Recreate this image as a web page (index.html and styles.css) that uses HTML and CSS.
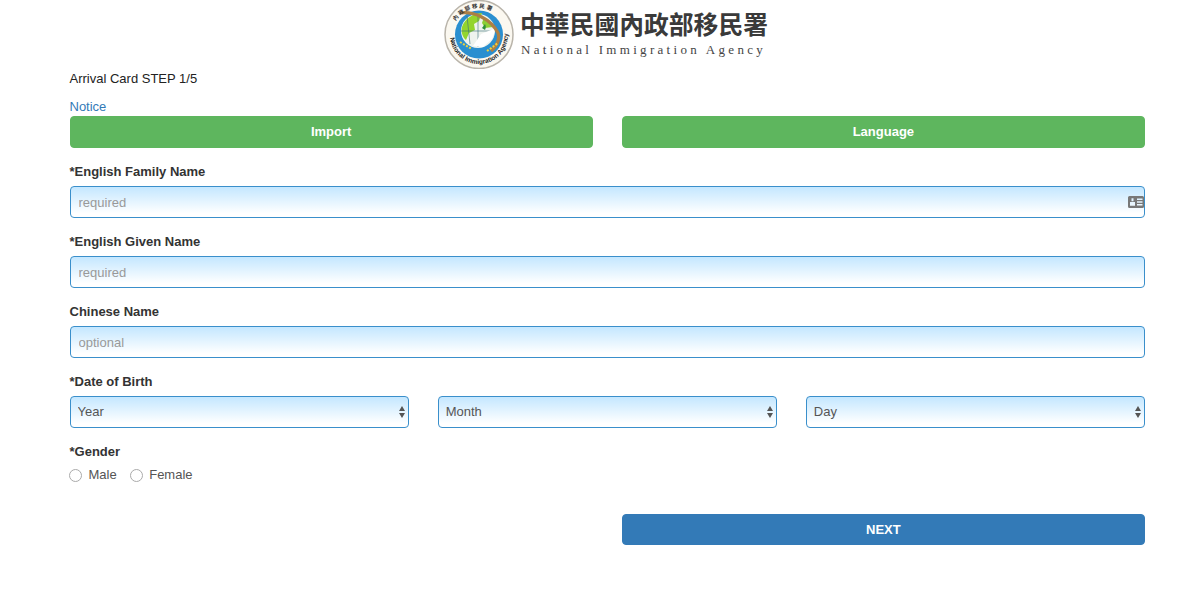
FILE: index.html
```html
<!DOCTYPE html>
<html lang="en">
<head>
<meta charset="utf-8">
<title>Arrival Card</title>
<link rel="stylesheet" href="styles.css">
</head>
<body>
<header class="brand">
  <svg class="seal" width="72" height="70" viewBox="0 0 72 70" aria-hidden="true">
    <defs>
      <path id="sealArcTop" d="M9 36a27 27 0 0 1 54 0"/>
      <path id="sealArcBottom" d="M7 36a29 29 0 0 0 58 0"/>
    </defs>
    <circle cx="36" cy="35.500" r="34" fill="#fbf8f0" stroke="#b9b4aa" stroke-width="1.500"/>
    <circle cx="36" cy="35.500" r="24" fill="#2a8fd0"/>
    <circle cx="35" cy="32" r="17" fill="#eef3ee"/>
    <path d="M19 28c3-9 12-14 20-14l-3 8-5 3 1 6-6 3-3 7c-4-3-5-9-4-13z" fill="#93d52e"/>
    <path d="M41 18c4 2 8 6 9 10l-8 1-3-5z" fill="#8ccf34"/>
    <path d="M42 25c1 2 1 4 0 6l-3-2z" fill="#2f8f3c"/>
    <path d="M24 17l3 28M35 15v33M18 32h34" fill="none" stroke="#3a6f7a" stroke-width=".6"/>
    <path d="M30 47l8-12 15-6-4 11-9 8z" fill="#fff"/>
    <path d="M17 14c14-2 31 6 38 20 2 5 0 12-7 18" fill="none" stroke="#ad7f45" stroke-width="3.200"/>
    <path d="M17 43l12 7M44 52l11-8" stroke="#f3d23a" stroke-width="2" stroke-dasharray="2 1.500"/>
    <text class="seal-top"><textPath href="#sealArcTop" startOffset="17%">內政部移民署</textPath></text>
    <text class="seal-bottom"><textPath href="#sealArcBottom" startOffset="3%">National Immigration Agency</textPath></text>
  </svg>
  <div class="brand-text">
    <div class="brand-zh">中華民國內政部移民署</div>
    <div class="brand-en">National Immigration Agency</div>
  </div>
</header>
<main class="page">
  <div class="step">Arrival Card STEP 1/5</div>
  <a class="notice" href="#">Notice</a>
  <div class="two-col">
    <button class="btn btn-green" type="button">Import</button>
    <button class="btn btn-green" type="button">Language</button>
  </div>
  <div class="field">
    <label class="label">*English Family Name</label>
    <div class="input-wrap">
      <input class="control" type="text" placeholder="required">
      <svg class="card-icon" width="16" height="12" viewBox="0 0 16 12" aria-hidden="true">
        <path fill="#787878" fill-rule="evenodd" d="M1.500 0h13A1.500 1.500 0 0 1 16 1.500v9a1.500 1.500 0 0 1-1.500 1.500h-13A1.500 1.500 0 0 1 0 10.500v-9A1.500 1.500 0 0 1 1.500 0zM3.500 2.200v3h2v-3zM2 6v3.800h5V6zM9 2.500v1.500h5.500V2.500zM9 5.300v1.500h5.500V5.300zM9 8v1.500h5.500V8z"/>
      </svg>
    </div>
  </div>
  <div class="field">
    <label class="label">*English Given Name</label>
    <input class="control" type="text" placeholder="required">
  </div>
  <div class="field">
    <label class="label">Chinese Name</label>
    <input class="control" type="text" placeholder="optional">
  </div>
  <div class="field">
    <label class="label">*Date of Birth</label>
    <div class="three-col">
      <div class="select-wrap"><select class="control control-select"><option>Year</option></select></div>
      <div class="select-wrap"><select class="control control-select"><option>Month</option></select></div>
      <div class="select-wrap"><select class="control control-select"><option>Day</option></select></div>
    </div>
  </div>
  <div class="field">
    <span class="label">*Gender</span>
    <div class="radios">
      <label class="radio"><input type="radio" name="gender"><span>Male</span></label>
      <label class="radio"><input type="radio" name="gender"><span>Female</span></label>
    </div>
  </div>
  <div class="two-col next-row">
    <span></span>
    <button class="btn btn-blue" type="button">NEXT</button>
  </div>
</main>
</body>
</html>
```

FILE: styles.css
```css
* { box-sizing: border-box; }
html, body { margin: 0; padding: 0; background: #fff; }
body {
  font-family: "Liberation Sans", Arial, sans-serif;
  font-size: 13px;
  line-height: 18px;
  color: #333;
  height: 601px;
  overflow: hidden;
}
.brand {
  display: flex;
  justify-content: center;
  align-items: flex-start;
  gap: 5px;
  height: 70px;
  padding-left: 13px;
}
.seal { flex: none; margin-top: -1px; }
.seal-top { font: 700 5.500px "Noto Sans CJK TC", sans-serif; fill: #333; letter-spacing: 1.500px; }
.seal-bottom { font: 700 6.500px "Liberation Sans", sans-serif; fill: #222; }
.brand-text { width: 250px; padding-top: 7px; }
.brand-zh {
  font-family: "Noto Sans CJK TC", "Noto Sans CJK SC", sans-serif;
  font-weight: 700;
  font-size: 24.800px;
  line-height: 33px;
  color: #3a3a3a;
  white-space: nowrap;
}
.brand-en {
  font-family: "Liberation Serif", "Times New Roman", serif;
  font-size: 13px;
  line-height: 16px;
  letter-spacing: 3.300px;
  color: #444;
  white-space: nowrap;
  margin-top: 2px;
  padding-left: 1px;
}
.page { padding: 0 55px 0 69.500px; }
.step { height: 18px; margin-bottom: 10px; color: #222; }
.notice { display: block; height: 18px; color: #337ab7; text-decoration: none; }
.two-col { display: grid; grid-template-columns: 1fr 1fr; gap: 29px; }
.three-col { display: grid; grid-template-columns: 1fr 1fr 1fr; gap: 29px; }
.btn {
  height: 32px;
  border: 1px solid transparent;
  border-radius: 4px;
  color: #fff;
  font: 700 13px/18px "Liberation Sans", Arial, sans-serif;
  padding: 0;
}
.btn-green { background: #5eb65e; border-color: #5eb65e; }
.btn-blue { background: #337ab7; border-color: #337ab7; }
.field { margin-top: 14px; height: 56px; }
.two-col + .field { margin-top: 15px; }
.label { display: block; font-weight: 700; height: 18px; margin-bottom: 5px; color: #333; }
.control {
  display: block;
  width: 100%;
  height: 32px;
  padding: 0 8px;
  border: 1px solid #3a8fcb;
  border-radius: 4px;
  background: linear-gradient(to bottom, #c4e7ff 0, #ffffff 88%);
  font: 13px/18px "Liberation Sans", Arial, sans-serif;
  color: #555;
  outline: none;
}
.control::placeholder { color: #999; opacity: 1; }
.control-select { appearance: none; -webkit-appearance: none; padding: 0 7px; }
.input-wrap, .select-wrap { position: relative; }
.card-icon { position: absolute; right: 1px; top: 10px; }
.select-wrap::before, .select-wrap::after {
  content: "";
  position: absolute;
  right: 4px;
  width: 0;
  height: 0;
  border-left: 3.500px solid transparent;
  border-right: 3.500px solid transparent;
  pointer-events: none;
}
.select-wrap::before { top: 10px; border-bottom: 5px solid #555; }
.select-wrap::after { top: 17px; border-top: 5px solid #555; }
.radios { display: flex; gap: 13px; align-items: center; height: 18px; margin: 2px 0 0 -0.500px; }
.radio { display: flex; align-items: center; gap: 6.500px; color: #555; }
.radio input {
  appearance: none;
  -webkit-appearance: none;
  width: 13px;
  height: 13px;
  margin: 0;
  border: 1px solid #aaa;
  border-radius: 50%;
  background: #fff;
}
.next-row { margin-top: 15px; }
.next-row .btn { height: 31px; }
```
